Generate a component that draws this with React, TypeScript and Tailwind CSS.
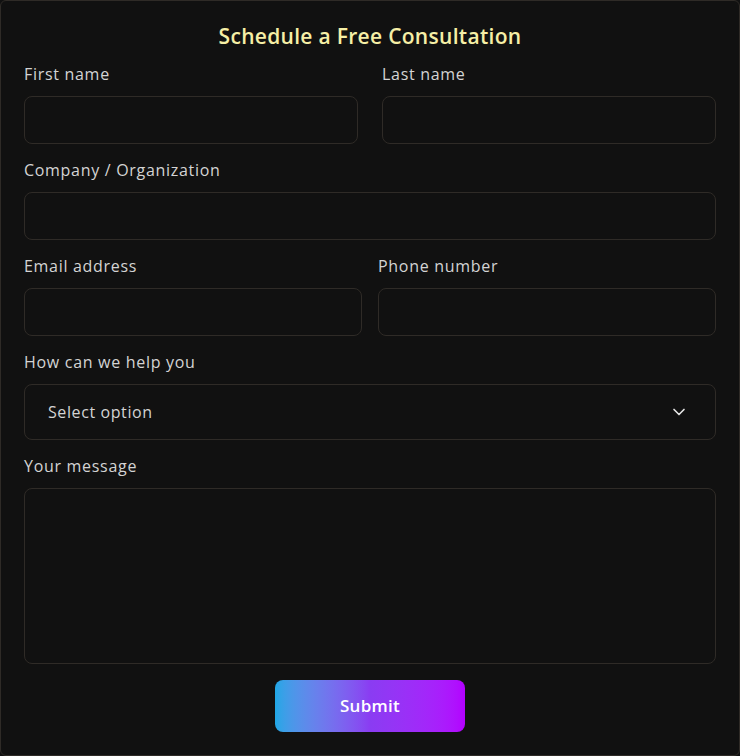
import { ChevronDown } from "lucide-react";

const inputCls =
  "h-12 w-full rounded-lg border border-[#2f2b27] bg-[#111111] px-4 text-[15px] text-[#d4d4d4] outline-none";

const labelCls = "mb-3 text-base leading-5 tracking-[0.7px] text-[#d4d4d4]";

function Field({ label, className = "" }: { label: string; className?: string }) {
  return (
    <div className={`flex flex-col ${className}`}>
      <label className={labelCls}>{label}</label>
      <input className={inputCls} />
    </div>
  );
}

export default function App() {
  return (
    <div className="h-[756px] w-[740px] bg-[#111111] font-['Open_Sans',sans-serif]">
      <form className="flex h-full flex-col gap-4 rounded-md border border-[#2f2b27] bg-[#111111] px-[23px] pb-6 pt-[21px]">
        {/* Header */}
        <h2 className="-mb-[2px] text-center text-[21px] font-semibold leading-7 tracking-[0.3px] text-[#f6efa6]">
          Schedule a Free Consultation
        </h2>

        <div className="grid grid-cols-2 gap-6">
          <Field label="First name" />
          <Field label="Last name" />
        </div>

        <Field label="Company / Organization" />

        <div className="grid grid-cols-2 gap-4">
          <Field label="Email address" />
          <Field label="Phone number" />
        </div>

        <div className="flex flex-col">
          <label className={labelCls}>How can we help you</label>
          <div className="flex h-14 items-center justify-between rounded-lg border border-[#2f2b27] pl-[23px] pr-[26px]">
            <span className="text-base tracking-[0.6px] text-[#d4d4d4]">Select option</span>
            <ChevronDown className="h-5 w-5 text-[#e5e5e5]" strokeWidth={2} />
          </div>
        </div>

        <div className="flex flex-col">
          <label className={labelCls}>Your message</label>
          <textarea className="h-[176px] w-full resize-none rounded-lg border border-[#2f2b27] bg-[#111111] p-4 text-[#d4d4d4] outline-none" />
        </div>

        <div className="flex justify-center">
          <button
            type="button"
            className="h-[52px] w-[190px] rounded-lg bg-gradient-to-r from-[#1ea7e6] via-[#8a3cf2] to-[#b300ff] text-[17px] font-semibold tracking-[0.3px] text-white"
          >
            Submit
          </button>
        </div>
      </form>
    </div>
  );
}
